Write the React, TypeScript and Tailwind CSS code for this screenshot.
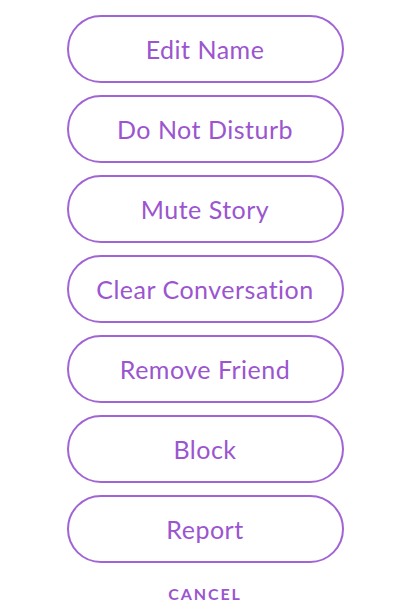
const actions = [
  'Edit Name',
  'Do Not Disturb',
  'Mute Story',
  'Clear Conversation',
  'Remove Friend',
  'Block',
  'Report',
];

export default function App() {
  return (
    <div
      className="w-[410px] h-[610px] bg-white flex flex-col items-center pt-[15px] overflow-hidden"
      style={{ fontFamily: 'Lato, "Noto Sans", sans-serif' }}
    >
      <div className="flex flex-col gap-3">
        {actions.map(label => (
          <button
            key={label}
            className="w-[277px] h-[68px] rounded-full border-2 border-[#a064d4] text-[#9b55cf] text-[25px] font-normal tracking-[0.02em] leading-none flex items-center justify-center"
          >
            {label}
          </button>
        ))}
      </div>
      <button className="mt-[23px] text-[16px] font-bold tracking-[0.12em] text-[#9b55cf] leading-none">
        CANCEL
      </button>
    </div>
  );
}
